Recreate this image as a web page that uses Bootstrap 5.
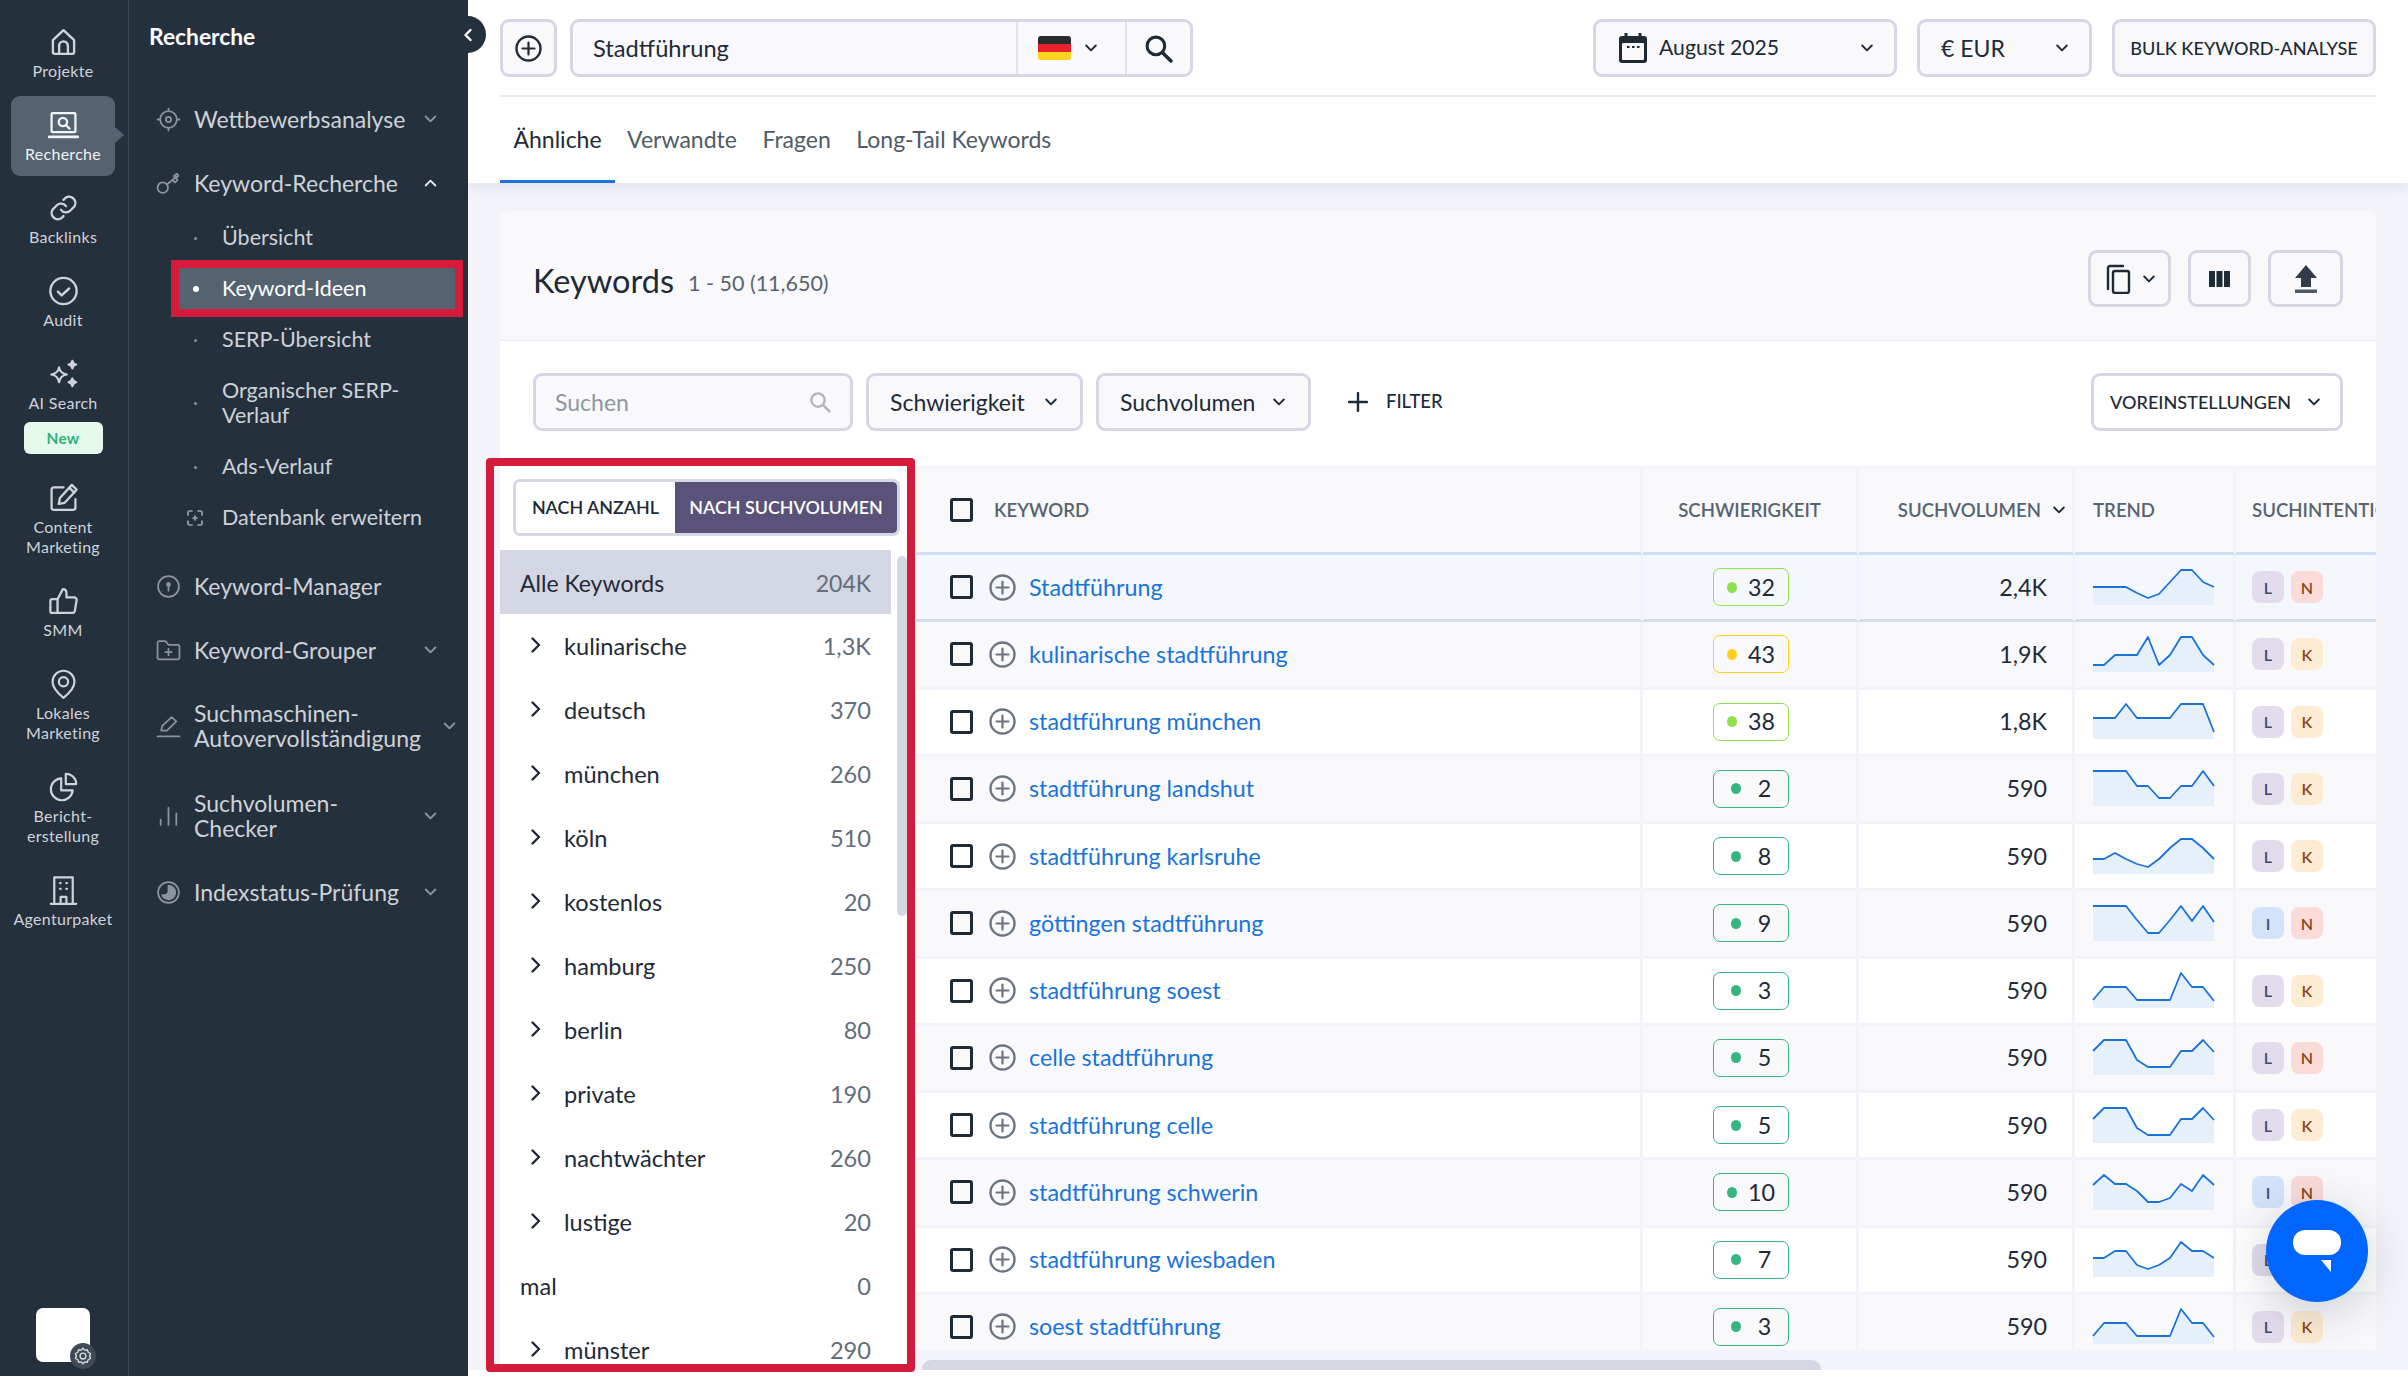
<!DOCTYPE html>
<html lang="de">
<head>
<meta charset="utf-8">
<title>Keyword-Ideen</title>
<link href="https://cdn.jsdelivr.net/npm/bootstrap@5.3.0/dist/css/bootstrap.min.css" rel="stylesheet">
<style>
html,body{height:1376px;overflow:hidden}
body{font-family:Lato,"Liberation Sans",sans-serif;color:#1f2a37;background:#fff;font-size:23px}
.app{height:1376px;position:relative}
svg{display:block;flex:none}
.ic{fill:none;stroke:currentColor;stroke-width:1.7;stroke-linecap:round;stroke-linejoin:round}
.dark{background:#25303d}
/* rail */
.rail{width:129px;flex:none;border-right:1px solid #3d4854;padding-top:13px;color:#cfd3d9}
.rail-it{width:104px;margin:0 0 3px 11px;padding:16px 0 12px;border-radius:9px;text-align:center;font-size:16px;letter-spacing:.3px;line-height:20px;position:relative;white-space:nowrap}
.rail-it svg{width:31px;height:30px;margin:-2px auto 4px;stroke-width:1.9}
.rail-it.on{background:#54636f;color:#f1f3f5}
.rail-it.on::after{content:"";position:absolute;left:104px;top:31px;border:8px solid transparent;border-left:9px solid #54636f;border-right:0}
.newtag{display:block;width:79px;height:32px;margin:9px auto 0;background:#e4f8ec;color:#2fb37c;border-radius:6px;font-weight:700;font-size:15.4px;line-height:32px}
.rail-bot{margin-top:auto;position:relative;width:54px;height:54px;background:#fff;border-radius:7px;margin-left:36px;margin-bottom:14px}
.gear{position:absolute;right:-6px;bottom:-7px;width:26px;height:26px;border-radius:50%;background:#3f4a56;color:#d6dade;display:flex;align-items:center;justify-content:center}
/* side */
.side{width:339px;flex:none;color:#cdd2d8;font-size:23px;line-height:25px;position:relative}
.side-h{height:72px;margin-bottom:15px;padding-left:20px;color:#fff;font-weight:700;font-size:22.8px}
.side-it{height:64px;padding-left:27px;color:#cdd2d8}
.side-it>svg:first-child{width:25px;height:25px;color:#8b949e;margin-right:13px}
.side-it .lbl{flex:1}
.side-it .chv{margin-right:31px;color:#8b949e;width:13px;height:8px}
.side-it .chv.near{margin-right:12px}
.side-it .chv.open{color:#e6e9ec;transform:rotate(180deg)}
.side-it.h2l{height:88px}
.side-it.h2m{height:91px}
.side-it.h1s{height:62px}
.subs{margin:-3px 0 11px;font-size:21.5px}
.sub-it{height:51px;margin-left:50px;width:276px;padding-left:43px;position:relative}
.sub-it::before{content:"";position:absolute;left:15px;top:50%;width:3px;height:3px;margin-top:-1px;border-radius:50%;background:#8b949e}
.sub-it.on{height:41px;margin-top:5px;margin-bottom:5px;background:#54636f;color:#fff;outline:8px solid #d61a3c}
.sub-it.on::before{width:6px;height:6px;margin-top:-3px;left:14px;background:#fff}
.sub-it.two{height:76px}
.sub-it.ico::before{display:none}
.sub-it.ico svg{position:absolute;left:8px;top:50%;margin-top:-8px;width:16px;height:16px;color:#9aa2ab}
.collapse-btn{position:absolute;right:-18px;top:16px;width:36px;height:37px;border-radius:50%;background:#25303d;color:#fff;z-index:5;display:flex;align-items:center;justify-content:center;padding:0}
.collapse-btn svg{stroke-width:2.4}
/* main */
.main{flex:1;min-width:0;background:#f3f4f9}
.top{background:#fff;height:183px;padding:0 32px;box-shadow:0 4px 12px rgba(40,50,80,.09);position:relative;z-index:2;flex:none}
.top-row{height:97px;border-bottom:2px solid #e6e7f0;padding-top:19px;align-items:flex-start}
.sk-btn{height:58px;border:3px solid #d5d8e4;border-radius:9px;background:#f9f9fc;color:#1f2a37;display:flex;align-items:center;font-size:23px;line-height:1;padding:0}
.add{width:57px;justify-content:center;margin-right:13px}
.sbox{width:623px}
.sbox .q{flex:1;padding:2px 0 0 20px;font-size:23.7px}
.sbox .fl{width:109px;flex:none;height:100%;border-left:2px solid #e1e3ec;padding-left:20px;gap:14px}
.sbox .go{width:65px;flex:none;height:100%;border-left:2px solid #e1e3ec;justify-content:center}
.flag{width:33px;height:24px;border-radius:3px;overflow:hidden;background:linear-gradient(#2a2a2e 33.3%,#e8212b 33.3%,#e8212b 66.6%,#ffd21f 66.6%)}
.chv2{width:12px;height:8px;color:#1f2a37}
.date{width:304px;padding:0 21px 0 22px;margin-right:20px;font-size:21.2px}
.date .cal{margin-right:11px}
.eur{width:175px;padding:0 21px;margin-right:20px}
.bulk{width:264px;justify-content:center;font-size:18.1px;font-weight:500}
.tabs-x{height:86px}
.tab-x{height:86px;padding:2px 13.5px 0;margin-right:-1.5px;display:flex;align-items:center;color:#4f5b67;font-size:23px;border-bottom:3px solid transparent;text-decoration:none}
.tab-x.on{color:#1f2a37;border-bottom-color:#1a73d9}
.body-x{flex:1;padding:28px 32px 0;min-height:0;position:relative}
.board{height:1159px;background:#fff;border-radius:9px 9px 0 0}
.board-h{height:130px;background:#f9f9fc;border-bottom:1px solid #e9eaf1;padding:6px 33px 0;border-radius:9px 9px 0 0;flex:none}
.board-h h2{font-size:32.5px;font-weight:400;margin:0;color:#1f2a37;line-height:1;padding-top:6px}
.board-h .cnt{font-size:21.5px;color:#59636f;margin-left:14px;padding-top:9px}
.ib{height:57px;justify-content:center}
.ib1{width:83px;gap:10px}
.ib2{width:63px;margin-left:17px}
.ib3{width:75px;margin-left:17px}
.filters{height:125px;padding:32px 33px 0;flex:none;align-items:flex-start}
.find{width:320px;padding:0 19px 0 19px;justify-content:space-between;color:#8d96a1;margin-right:13px}
.pick{justify-content:space-between;padding:0 23px 0 21px;margin-right:13px}
.pick1{width:217px}
.pick2{width:215px}
.plusf{display:flex;align-items:center;height:58px;margin-left:24px;gap:18px;font-size:18.4px;font-weight:500}
.preset{background:#fff;width:252px;margin-left:auto;padding:0 20px 0 16px;justify-content:space-between;font-size:18.1px;font-weight:500}
.split{flex:1;min-height:0}
/* left panel */
.groups{width:416px;flex:none;position:relative;height:904px}
.groups::after{content:"";position:absolute;left:-14px;top:-8px;width:429px;height:914px;border:8px solid #d61a3c;border-radius:4px;pointer-events:none}
.toggle-x{margin:13px 0 14px 13px;width:387px;height:57px;border:3px solid #d5d8e4;border-radius:7px;font-size:17.9px;font-weight:600;overflow:hidden}
.toggle-x span{display:flex;align-items:center;justify-content:center;height:100%}
.toggle-x .a{width:159px}
.toggle-x .b{flex:1;background:#5a5278;color:#fff;border-radius:0 4px 4px 0}
.glist{width:391px;height:815px;overflow:hidden;font-size:23.6px}
.g-row{height:64px;padding:2px 20px 0 64px;position:relative}
.g-row.top-g{background:#d3d6e3;padding-left:20px;font-size:23px}
.g-row.bare{padding-left:20px}
.g-row svg{position:absolute;left:31px;top:50%;margin-top:-9px;width:10px;height:16px;color:#1f2a37}
.g-row .n{color:#636d79;margin-left:auto}
.gthumb{width:10px;height:360px;background:#d3d6e3;border-radius:5px;margin:6px 0 0 6px}
/* table */
.tbl-wrap{flex:1;min-width:0;display:flex;flex-direction:column;height:904px}
.tbl-clip{height:884px;overflow:hidden;flex:none}
table.kw{table-layout:fixed;width:1621px;border-collapse:separate;border-spacing:0;margin:0;font-size:23.3px}
.kw td,.kw th{padding:0;height:67.25px;border-bottom:3px solid #f3f4f9;border-right:3px solid #f3f4f9;vertical-align:middle;background:#fff;color:#1f2a37;box-shadow:none}
.kw th{height:89px;border-top:3px solid #f3f4f9;border-bottom-color:#cfe0f5;background:#f9f9fc;color:#566471;font-size:18.6px;font-weight:600}
.kw th .sortw{padding-right:7px;gap:12px}
.kw th .cbx{margin-right:21px}
.kw .col1{width:727px}.kw .col2,.kw .col3{width:216px}.kw .col4{width:161px}.kw .col5{width:301px}
.kw .padt{padding-left:18px}.kw .padi{padding-left:16px}
.kw tr.hl td{background:#f4f7fc;border-bottom-color:#cfe0f5}
.kw tr.alt td{background:#f9f9fc}
.kw .c1{padding-left:34px}
.kw a{color:#1a73d9;text-decoration:none}
.cbx{width:23px;height:24px;border:3px solid #1f2a37;border-radius:3px;flex:none;margin-right:16px}
.pl{width:27px;height:27px;color:#6b7582;margin-right:13px}
.kd{width:76px;height:38px;margin-left:70px;border:1.5px solid;border-radius:7px;padding-left:13px;gap:11px}
.kd i{width:10px;height:11px;border-radius:50%;background:currentColor;flex:none}
.kd b{width:25px;text-align:center;font-weight:400;color:#1f2a37}
.kd.one{padding-left:17px}
.lg{color:#8ee04e}.ye{color:#ffce1f}.te{color:#35b580}
.vol{text-align:right;padding-right:25px!important}
.spark{width:121px;height:35px;margin-left:18px;overflow:visible}
.spark .fa{fill:#e5f0fa;stroke:none}
.spark .li{fill:none;stroke:#1a73d9;stroke-width:1.8;stroke-linejoin:round}
.int{width:32px;height:32px;border-radius:8px;font-size:16px;font-weight:600;display:flex;align-items:center;justify-content:center;margin-right:7px;padding-top:1px}
.int.L{background:#e3dcec;color:#43496a}.int.N{background:#fadbd8;color:#8a4513}.int.K{background:#fdebd3;color:#8a4513}.int.I{background:#d3e3f9;color:#3a5272}
.intents{padding-left:16px}
.h-bar{height:20px;background:#f3f4f9;flex:none;padding:10px 0 0 6px}
.h-bar div{width:899px;height:10px;background:#d5d7e3;border-radius:9px 9px 0 0}
.chat{position:absolute;left:2266px;top:1200px;width:102px;height:102px;border-radius:50%;background:#0066ff;box-shadow:0 10px 50px rgba(30,40,70,.22);z-index:9;display:flex;align-items:center;justify-content:center}
.foot-w{height:6px;background:#fff;flex:none}
</style>
</head>
<body>
<svg width="0" height="0" class="position-absolute">
<defs>
<symbol id="chv" viewBox="0 0 12 8"><path d="M1.200 1.500 6 6.300l4.800-4.800" fill="none" stroke="currentColor" stroke-width="1.900" stroke-linecap="round" stroke-linejoin="round"/></symbol>
<symbol id="chr" viewBox="0 0 10 16"><path d="M1.500 1.500 8 8l-6.500 6.500" fill="none" stroke="currentColor" stroke-width="2.400" stroke-linecap="round" stroke-linejoin="round"/></symbol>
<symbol id="plc" viewBox="0 0 27 27"><circle cx="13.500" cy="13.500" r="12" fill="none" stroke="currentColor" stroke-width="2.400"/><path d="M13.500 7.500v12M7.500 13.500h12" stroke="currentColor" stroke-width="2.200" stroke-linecap="round"/></symbol>
<symbol id="mag" viewBox="0 0 28 28"><circle cx="11.500" cy="11.500" r="8.500" fill="none" stroke="currentColor" stroke-width="3"/><path d="m18 18 8 8" stroke="currentColor" stroke-width="3.400" stroke-linecap="round"/></symbol>
</defs>
</svg>
<div class="app d-flex">
<nav class="rail dark d-flex flex-column">
<div class="rail-it"><svg class="ic" viewBox="0 0 24 24"><path d="M3.500 10.500 12 2.500l8.500 8V20a1.500 1.500 0 0 1-1.500 1.500H5A1.500 1.500 0 0 1 3.500 20z"/><path d="M8.500 21.500V15a3.500 3.500 0 0 1 7 0v6.500"/></svg>Projekte</div>
<div class="rail-it on"><svg class="ic" viewBox="0 0 26 24"><rect x="3" y="2" width="20" height="16" rx="1"/><path d="M1 22h24" stroke-width="2.400"/><circle cx="12.500" cy="9.500" r="3.500"/><path d="m15 12 3 3"/></svg>Recherche</div>
<div class="rail-it"><svg class="ic" viewBox="0 0 24 24"><path d="M10 13.500a5 5 0 0 0 7.500.5l3-3a5 5 0 0 0-7-7L12 5.500"/><path d="M14 10.500a5 5 0 0 0-7.500-.5l-3 3a5 5 0 0 0 7 7l1.500-1.500"/></svg>Backlinks</div>
<div class="rail-it"><svg class="ic" viewBox="0 0 24 24"><circle cx="12" cy="12" r="10.500"/><path d="m7.500 12.500 3 3 6-5.500"/></svg>Audit</div>
<div class="rail-it"><svg class="ic" viewBox="0 0 28 26"><path d="M10 7c.8 4 2.500 5.700 7 6.500-4.500.8-6.200 2.500-7 7-.8-4.500-2.500-6.200-7-7 4.500-.8 6.200-2.500 7-6.500z"/><path d="M22 1c.5 2.200 1.300 3 3.500 3.500C23.300 5 22.500 5.800 22 8c-.5-2.200-1.300-3-3.500-3.500C20.700 4 21.500 3.200 22 1zM22 17c.5 2.200 1.300 3 3.500 3.500-2.200.5-3 1.300-3.500 3.500-.5-2.200-1.300-3-3.500-3.500 2.200-.5 3-1.300 3.500-3.500z" fill="currentColor"/></svg>AI Search<span class="newtag">New</span></div>
<div class="rail-it"><svg class="ic" viewBox="0 0 26 24"><path d="M13 3H5a2 2 0 0 0-2 2v15a2 2 0 0 0 2 2h16a2 2 0 0 0 2-2v-7"/><path d="m20 1 4 4-10 11-5 1 1-5z"/><path d="m18 3.500 4 4"/></svg>Content<br>Marketing</div>
<div class="rail-it"><svg class="ic" viewBox="0 0 26 24"><path d="M8 10.500 12.500 2c2 0 3 1.500 3 3.500V9h6.500a2 2 0 0 1 2 2.300l-1.500 9A2 2 0 0 1 20.500 22H8z"/><path d="M8 10.500H3.500A1.500 1.500 0 0 0 2 12v8.500A1.500 1.500 0 0 0 3.500 22H8"/></svg>SMM</div>
<div class="rail-it"><svg class="ic" viewBox="0 0 24 26"><path d="M12 25C6 20 2.500 15.500 2.500 11a9.500 9.500 0 0 1 19 0c0 4.500-3.500 9-9.500 14z"/><circle cx="12" cy="11" r="4"/></svg>Lokales<br>Marketing</div>
<div class="rail-it"><svg class="ic" viewBox="0 0 26 26"><path d="M11 5.500a9.500 9.500 0 1 0 10 10.500H11z"/><path d="M15 1.500a9 9 0 0 1 9 9h-9z"/></svg>Bericht-<br>erstellung</div>
<div class="rail-it"><svg class="ic" viewBox="0 0 24 26"><path d="M4 25V2h16v23M1 25h22"/><path d="M9.500 25v-6h5v6"/><path d="M9 7h.5M14.500 7h.5M9 12h.5M14.500 12h.5" stroke-width="2"/></svg>Agenturpaket</div>
<div class="rail-bot"><span class="gear"><svg class="ic" width="20" height="20" viewBox="0 0 24 24"><circle cx="12" cy="12" r="3.500"/><path d="M12 2.500 14 5l3.200-.5 1 3L21 9l-1 3 1 3-2.800 1.500-1 3L14 19l-2 2.500L10 19l-3.200.5-1-3L3 15l1-3-1-3 2.800-1.500 1-3L10 5z"/></svg></span></div>
</nav>

<aside class="side dark">
<button class="collapse-btn border-0" aria-label="Einklappen"><svg width="10" height="14" viewBox="0 0 10 14" class="ic"><path d="M7.500 2 2.500 7l5 5"/></svg></button>
<div class="side-h d-flex align-items-center">Recherche</div>
<div class="side-it d-flex align-items-center"><svg class="ic" viewBox="0 0 24 24"><circle cx="12" cy="12" r="8"/><circle cx="12" cy="12" r="2.500"/><path d="M12 1.500V4M12 20v2.500M1.500 12H4M20 12h2.500"/></svg><span class="lbl">Wettbewerbsanalyse</span><svg class="chv"><use href="#chv"/></svg></div>
<div class="side-it d-flex align-items-center"><svg class="ic" viewBox="0 0 24 24"><circle cx="6.500" cy="16" r="5"/><path d="m10.500 13 9-7.500M16 8.500l2 2.500 2.500-2-1-3 2-1.500-1.500-2-3 2.500"/></svg><span class="lbl">Keyword-Recherche</span><svg class="chv open"><use href="#chv"/></svg></div>
<div class="subs">
<div class="sub-it d-flex align-items-center">Übersicht</div>
<div class="sub-it on d-flex align-items-center">Keyword-Ideen</div>
<div class="sub-it d-flex align-items-center">SERP-Übersicht</div>
<div class="sub-it two d-flex align-items-center">Organischer SERP-<br>Verlauf</div>
<div class="sub-it d-flex align-items-center">Ads-Verlauf</div>
<div class="sub-it ico d-flex align-items-center"><svg class="ic" viewBox="0 0 16 16"><path d="M1 5V2.500A1.500 1.500 0 0 1 2.500 1H5M11 1h2.500A1.500 1.500 0 0 1 15 2.500V5M15 11v2.500a1.500 1.500 0 0 1-1.500 1.500H11M5 15H2.500A1.500 1.500 0 0 1 1 13.500V11"/><path d="M8 6v4M6 8h4"/></svg>Datenbank erweitern</div>
</div>
<div class="side-it d-flex align-items-center"><svg class="ic" viewBox="0 0 24 24"><circle cx="12" cy="12" r="10"/><circle cx="12" cy="10" r="1.400" fill="currentColor"/><path d="M12 11v5"/></svg><span class="lbl">Keyword-Manager</span></div>
<div class="side-it d-flex align-items-center"><svg class="ic" viewBox="0 0 24 24"><path d="M1.500 4.500A1.500 1.500 0 0 1 3 3h6l3 3.500h9A1.500 1.500 0 0 1 22.500 8v11a1.500 1.500 0 0 1-1.500 1.500H3A1.500 1.500 0 0 1 1.500 19z"/><path d="M12 10.500v6M9 13.500h6"/></svg><span class="lbl">Keyword-Grouper</span><svg class="chv"><use href="#chv"/></svg></div>
<div class="side-it h2l d-flex align-items-center"><svg class="ic" viewBox="0 0 24 24"><path d="M1.500 21.500h21"/><path d="m5 16 1-4.500L15 3l4.500 4-9 9z"/></svg><span class="lbl">Suchmaschinen-<br>Autovervollständigung</span><svg class="chv near"><use href="#chv"/></svg></div>
<div class="side-it h2m d-flex align-items-center"><svg class="ic" viewBox="0 0 24 24"><path d="M4.500 21v-5M12 21V4.500M19.500 21V10"/></svg><span class="lbl">Suchvolumen-<br>Checker</span><svg class="chv"><use href="#chv"/></svg></div>
<div class="side-it h1s d-flex align-items-center"><svg class="ic" viewBox="0 0 24 24"><circle cx="12" cy="12" r="10"/><path d="M12 5.500a6.500 6.500 0 1 1-6 9c2.500.5 5.500-.5 6-3z" fill="currentColor"/></svg><span class="lbl">Indexstatus-Prüfung</span><svg class="chv"><use href="#chv"/></svg></div>
</aside>

<main class="main d-flex flex-column">
<header class="top">
<div class="top-row d-flex">
<button class="sk-btn add" aria-label="Hinzufügen"><svg width="27" height="27"><use href="#plc"/></svg></button>
<div class="sk-btn sbox"><span class="q">Stadtführung</span><span class="fl d-flex align-items-center"><span class="flag"></span><svg class="chv2"><use href="#chv"/></svg></span><span class="go d-flex align-items-center"><svg width="29" height="29"><use href="#mag"/></svg></span></div>
<div class="sk-btn date ms-auto"><svg class="cal" width="30" height="32" viewBox="0 0 30 32"><rect x="1" y="4" width="28" height="27" rx="3" fill="#1f2a37"/><path d="M8 1v6M22 1v6" stroke="#1f2a37" stroke-width="3"/><rect x="4" y="11" width="22" height="17" rx="1" fill="#f9f9fc"/><path d="M9 15h2.500M14 15h2.500M19 15h2.500" stroke="#1f2a37" stroke-width="2"/></svg><span>August 2025</span><svg class="chv2 ms-auto"><use href="#chv"/></svg></div>
<div class="sk-btn eur"><span>€ EUR</span><svg class="chv2 ms-auto"><use href="#chv"/></svg></div>
<button class="sk-btn bulk">BULK KEYWORD-ANALYSE</button>
</div>
<div class="tabs-x d-flex">
<a class="tab-x on" href="#">Ähnliche</a><a class="tab-x" href="#">Verwandte</a><a class="tab-x" href="#">Fragen</a><a class="tab-x" href="#">Long-Tail Keywords</a>
</div>
</header>
<div class="body-x">
<section class="board d-flex flex-column">
<div class="board-h d-flex align-items-center">
<h2>Keywords</h2><span class="cnt">1 - 50 (11,650)</span>
<button class="sk-btn ib ib1 ms-auto"><svg width="28" height="30" viewBox="0 0 28 30" class="ic"><path d="M3 25V4a2 2 0 0 1 2-2h13" stroke-width="2.400"/><rect x="8" y="7" width="16" height="22" rx="2" stroke-width="2.400"/></svg><svg class="chv2"><use href="#chv"/></svg></button>
<button class="sk-btn ib ib2"><svg width="21" height="16" viewBox="0 0 21 16"><path d="M0 0h6v16H0zM7.500 0h6v16h-6zM15 0h6v16h-6z" fill="#1f2a37"/></svg></button>
<button class="sk-btn ib ib3"><svg width="24" height="28" viewBox="0 0 24 28"><path d="M12 0 23 13h-6v9H7v-9H1z" fill="#303c4a"/><path d="M1 24.500h22V28H1z" fill="#4d5965"/></svg></button>
</div>
<div class="filters d-flex">
<div class="sk-btn find"><span>Suchen</span><svg width="22" height="22" class="text-secondary opacity-50"><use href="#mag"/></svg></div>
<div class="sk-btn pick pick1"><span>Schwierigkeit</span><svg class="chv2"><use href="#chv"/></svg></div>
<div class="sk-btn pick pick2"><span>Suchvolumen</span><svg class="chv2"><use href="#chv"/></svg></div>
<div class="plusf"><svg width="20" height="20" viewBox="0 0 20 20"><path d="M10 1v18M1 10h18" stroke="#1f2a37" stroke-width="2.400" stroke-linecap="round"/></svg>FILTER</div>
<div class="sk-btn preset"><span>VOREINSTELLUNGEN</span><svg class="chv2"><use href="#chv"/></svg></div>
</div>
<div class="split d-flex">
<div class="groups">
<div class="toggle-x d-flex"><span class="a">NACH ANZAHL</span><span class="b">NACH SUCHVOLUMEN</span></div>
<div class="d-flex">
<div class="glist">
<div class="g-row top-g d-flex align-items-center">Alle Keywords<span class="n">204K</span></div>
<div class="g-row d-flex align-items-center"><svg><use href="#chr"/></svg>kulinarische<span class="n">1,3K</span></div>
<div class="g-row d-flex align-items-center"><svg><use href="#chr"/></svg>deutsch<span class="n">370</span></div>
<div class="g-row d-flex align-items-center"><svg><use href="#chr"/></svg>münchen<span class="n">260</span></div>
<div class="g-row d-flex align-items-center"><svg><use href="#chr"/></svg>köln<span class="n">510</span></div>
<div class="g-row d-flex align-items-center"><svg><use href="#chr"/></svg>kostenlos<span class="n">20</span></div>
<div class="g-row d-flex align-items-center"><svg><use href="#chr"/></svg>hamburg<span class="n">250</span></div>
<div class="g-row d-flex align-items-center"><svg><use href="#chr"/></svg>berlin<span class="n">80</span></div>
<div class="g-row d-flex align-items-center"><svg><use href="#chr"/></svg>private<span class="n">190</span></div>
<div class="g-row d-flex align-items-center"><svg><use href="#chr"/></svg>nachtwächter<span class="n">260</span></div>
<div class="g-row d-flex align-items-center"><svg><use href="#chr"/></svg>lustige<span class="n">20</span></div>
<div class="g-row bare d-flex align-items-center">mal<span class="n">0</span></div>
<div class="g-row d-flex align-items-center"><svg><use href="#chr"/></svg>münster<span class="n">290</span></div>
</div>
<div class="gthumb"></div>
</div>
</div>
<div class="tbl-wrap">
<div class="tbl-clip">
<table class="kw table">
<thead><tr>
<th class="col1"><div class="c1 d-flex align-items-center"><span class="cbx"></span>KEYWORD</div></th>
<th class="col2 text-center">SCHWIERIGKEIT</th>
<th class="col3"><div class="sortw d-flex align-items-center justify-content-end">SUCHVOLUMEN<svg class="chv2"><use href="#chv"/></svg></div></th>
<th class="col4 padt">TREND</th>
<th class="col5 padi">SUCHINTENTION</th>
</tr></thead>
<tbody>
<tr class="hl"><td><div class="c1 d-flex align-items-center"><span class="cbx"></span><svg class="pl"><use href="#plc"/></svg><a href="#">Stadtführung</a></div></td><td><div class="kd lg d-flex align-items-center"><i></i><b>32</b></div></td><td class="vol">2,4K</td><td><svg class="spark" viewBox="0 0 121 35"><path class="fa" d="M0 17L11 17 22 17 33 17 44 23 55 28 66 24 77 12 88 0 99 0 110 12 121 17V35H0z"/><path class="li" d="M0 17L11 17 22 17 33 17 44 23 55 28 66 24 77 12 88 0 99 0 110 12 121 17"/></svg></td><td><div class="intents d-flex"><span class="int L">L</span><span class="int N">N</span></div></td></tr>
<tr class="alt"><td><div class="c1 d-flex align-items-center"><span class="cbx"></span><svg class="pl"><use href="#plc"/></svg><a href="#">kulinarische stadtführung</a></div></td><td><div class="kd ye d-flex align-items-center"><i></i><b>43</b></div></td><td class="vol">1,9K</td><td><svg class="spark" viewBox="0 0 121 35"><path class="fa" d="M0 28L11 28 22 18 33 18 44 18 55 0 66 28 77 18 88 0 99 0 110 18 121 28V35H0z"/><path class="li" d="M0 28L11 28 22 18 33 18 44 18 55 0 66 28 77 18 88 0 99 0 110 18 121 28"/></svg></td><td><div class="intents d-flex"><span class="int L">L</span><span class="int K">K</span></div></td></tr>
<tr><td><div class="c1 d-flex align-items-center"><span class="cbx"></span><svg class="pl"><use href="#plc"/></svg><a href="#">stadtführung münchen</a></div></td><td><div class="kd lg d-flex align-items-center"><i></i><b>38</b></div></td><td class="vol">1,8K</td><td><svg class="spark" viewBox="0 0 121 35"><path class="fa" d="M0 14L11 14 22 14 33 0 44 14 55 14 66 14 77 14 88 0 99 0 110 0 121 28V35H0z"/><path class="li" d="M0 14L11 14 22 14 33 0 44 14 55 14 66 14 77 14 88 0 99 0 110 0 121 28"/></svg></td><td><div class="intents d-flex"><span class="int L">L</span><span class="int K">K</span></div></td></tr>
<tr class="alt"><td><div class="c1 d-flex align-items-center"><span class="cbx"></span><svg class="pl"><use href="#plc"/></svg><a href="#">stadtführung landshut</a></div></td><td><div class="kd te one d-flex align-items-center"><i></i><b>2</b></div></td><td class="vol">590</td><td><svg class="spark" viewBox="0 0 121 35"><path class="fa" d="M0 0L11 0 22 0 33 0 44 15 55 15 66 27 77 27 88 15 99 15 110 0 121 15V35H0z"/><path class="li" d="M0 0L11 0 22 0 33 0 44 15 55 15 66 27 77 27 88 15 99 15 110 0 121 15"/></svg></td><td><div class="intents d-flex"><span class="int L">L</span><span class="int K">K</span></div></td></tr>
<tr><td><div class="c1 d-flex align-items-center"><span class="cbx"></span><svg class="pl"><use href="#plc"/></svg><a href="#">stadtführung karlsruhe</a></div></td><td><div class="kd te one d-flex align-items-center"><i></i><b>8</b></div></td><td class="vol">590</td><td><svg class="spark" viewBox="0 0 121 35"><path class="fa" d="M0 20L11 20 22 14 33 20 44 25 55 28 66 20 77 9 88 0 99 0 110 9 121 20V35H0z"/><path class="li" d="M0 20L11 20 22 14 33 20 44 25 55 28 66 20 77 9 88 0 99 0 110 9 121 20"/></svg></td><td><div class="intents d-flex"><span class="int L">L</span><span class="int K">K</span></div></td></tr>
<tr class="alt"><td><div class="c1 d-flex align-items-center"><span class="cbx"></span><svg class="pl"><use href="#plc"/></svg><a href="#">göttingen stadtführung</a></div></td><td><div class="kd te one d-flex align-items-center"><i></i><b>9</b></div></td><td class="vol">590</td><td><svg class="spark" viewBox="0 0 121 35"><path class="fa" d="M0 0L11 0 22 0 33 0 44 14 55 27 66 27 77 14 88 0 99 15 110 0 121 16V35H0z"/><path class="li" d="M0 0L11 0 22 0 33 0 44 14 55 27 66 27 77 14 88 0 99 15 110 0 121 16"/></svg></td><td><div class="intents d-flex"><span class="int I">I</span><span class="int N">N</span></div></td></tr>
<tr><td><div class="c1 d-flex align-items-center"><span class="cbx"></span><svg class="pl"><use href="#plc"/></svg><a href="#">stadtführung soest</a></div></td><td><div class="kd te one d-flex align-items-center"><i></i><b>3</b></div></td><td class="vol">590</td><td><svg class="spark" viewBox="0 0 121 35"><path class="fa" d="M0 27L11 14 22 14 33 14 44 27 55 27 66 27 77 27 88 0 99 14 110 14 121 28V35H0z"/><path class="li" d="M0 27L11 14 22 14 33 14 44 27 55 27 66 27 77 27 88 0 99 14 110 14 121 28"/></svg></td><td><div class="intents d-flex"><span class="int L">L</span><span class="int K">K</span></div></td></tr>
<tr class="alt"><td><div class="c1 d-flex align-items-center"><span class="cbx"></span><svg class="pl"><use href="#plc"/></svg><a href="#">celle stadtführung</a></div></td><td><div class="kd te one d-flex align-items-center"><i></i><b>5</b></div></td><td class="vol">590</td><td><svg class="spark" viewBox="0 0 121 35"><path class="fa" d="M0 11L11 0 22 0 33 0 44 20 55 27 66 27 77 27 88 11 99 11 110 0 121 12V35H0z"/><path class="li" d="M0 11L11 0 22 0 33 0 44 20 55 27 66 27 77 27 88 11 99 11 110 0 121 12"/></svg></td><td><div class="intents d-flex"><span class="int L">L</span><span class="int N">N</span></div></td></tr>
<tr><td><div class="c1 d-flex align-items-center"><span class="cbx"></span><svg class="pl"><use href="#plc"/></svg><a href="#">stadtführung celle</a></div></td><td><div class="kd te one d-flex align-items-center"><i></i><b>5</b></div></td><td class="vol">590</td><td><svg class="spark" viewBox="0 0 121 35"><path class="fa" d="M0 11L11 0 22 0 33 0 44 20 55 27 66 27 77 27 88 11 99 11 110 0 121 12V35H0z"/><path class="li" d="M0 11L11 0 22 0 33 0 44 20 55 27 66 27 77 27 88 11 99 11 110 0 121 12"/></svg></td><td><div class="intents d-flex"><span class="int L">L</span><span class="int K">K</span></div></td></tr>
<tr class="alt"><td><div class="c1 d-flex align-items-center"><span class="cbx"></span><svg class="pl"><use href="#plc"/></svg><a href="#">stadtführung schwerin</a></div></td><td><div class="kd te d-flex align-items-center"><i></i><b>10</b></div></td><td class="vol">590</td><td><svg class="spark" viewBox="0 0 121 35"><path class="fa" d="M0 10L11 0 22 9 33 9 44 16 55 27 66 27 77 23 88 9 99 16 110 0 121 10V35H0z"/><path class="li" d="M0 10L11 0 22 9 33 9 44 16 55 27 66 27 77 23 88 9 99 16 110 0 121 10"/></svg></td><td><div class="intents d-flex"><span class="int I">I</span><span class="int N">N</span></div></td></tr>
<tr><td><div class="c1 d-flex align-items-center"><span class="cbx"></span><svg class="pl"><use href="#plc"/></svg><a href="#">stadtführung wiesbaden</a></div></td><td><div class="kd te one d-flex align-items-center"><i></i><b>7</b></div></td><td class="vol">590</td><td><svg class="spark" viewBox="0 0 121 35"><path class="fa" d="M0 16L11 16 22 9 33 9 44 23 55 27 66 23 77 16 88 0 99 9 110 9 121 16V35H0z"/><path class="li" d="M0 16L11 16 22 9 33 9 44 23 55 27 66 23 77 16 88 0 99 9 110 9 121 16"/></svg></td><td><div class="intents d-flex"><span class="int L">L</span><span class="int K">K</span></div></td></tr>
<tr class="alt"><td><div class="c1 d-flex align-items-center"><span class="cbx"></span><svg class="pl"><use href="#plc"/></svg><a href="#">soest stadtführung</a></div></td><td><div class="kd te one d-flex align-items-center"><i></i><b>3</b></div></td><td class="vol">590</td><td><svg class="spark" viewBox="0 0 121 35"><path class="fa" d="M0 27L11 14 22 14 33 14 44 27 55 27 66 27 77 27 88 0 99 14 110 14 121 28V35H0z"/><path class="li" d="M0 27L11 14 22 14 33 14 44 27 55 27 66 27 77 27 88 0 99 14 110 14 121 28"/></svg></td><td><div class="intents d-flex"><span class="int L">L</span><span class="int K">K</span></div></td></tr>
</tbody>
</table>
</div>
<div class="h-bar"><div></div></div>
</div>
</div>
</section>
</div>
<div class="foot-w"></div>
</main>
<div class="chat"><svg width="50" height="44" viewBox="0 0 50 44"><rect x="1" y="1" width="48" height="25" rx="12" fill="#fff"/><path d="M29 31h10v12z" fill="#fff"/></svg></div>
</div>
<script src="https://cdn.jsdelivr.net/npm/bootstrap@5.3.0/dist/js/bootstrap.bundle.min.js"></script>
</body>
</html>
